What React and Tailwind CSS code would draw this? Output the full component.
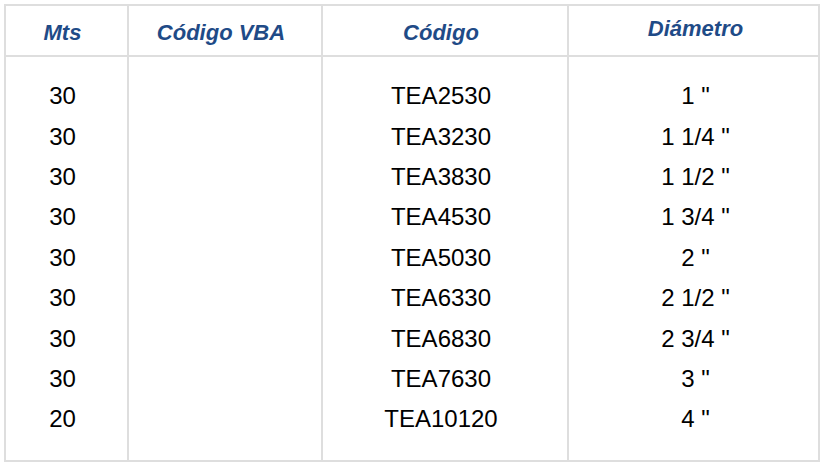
import React from "react";

const rows = [
  ["30", "TEA2530", '1 "'],
  ["30", "TEA3230", '1 1/4 "'],
  ["30", "TEA3830", '1 1/2 "'],
  ["30", "TEA4530", '1 3/4 "'],
  ["30", "TEA5030", '2 "'],
  ["30", "TEA6330", '2 1/2 "'],
  ["30", "TEA6830", '2 3/4 "'],
  ["30", "TEA7630", '3 "'],
  ["20", "TEA10120", '4 "'],
];

const headers = [
  { label: "Mts", cls: "border-r-2 border-[#dedede] pt-1 pr-2" },
  { label: "Código VBA", cls: "border-r-2 border-[#dedede] pt-1 pr-2" },
  { label: "Código", cls: "border-r-2 border-[#dedede] pt-1 pr-2" },
  { label: "Diámetro", cls: "pb-1 pl-1" },
];

const App = () => {
  return (
    <div className="w-[825px] h-[466px] bg-white pl-1 pt-1 font-['Liberation_Sans',Arial,sans-serif]">
      <div className="w-[816px] border-2 border-[#dedede]">
        {/* Header */}
        <div className="grid grid-cols-[123px_194px_246px_1fr] h-[51px] border-b-2 border-[#dedede]">
          {headers.map((h) => (
            <div
              key={h.label}
              className={`flex items-center justify-center text-[22px] font-bold italic text-[#1f4b87] ${h.cls}`}
            >
              {h.label}
            </div>
          ))}
        </div>

        {/* Body */}
        <div className="grid grid-cols-[123px_194px_246px_1fr] h-[403px] text-[24px] text-black">
          <div className="border-r-2 border-[#dedede] pt-[19px]">
            {rows.map((r, i) => (
              <div key={i} className="h-[40.4px] flex items-center justify-center pr-2">
                {r[0]}
              </div>
            ))}
          </div>
          <div className="border-r-2 border-[#dedede]" />
          <div className="border-r-2 border-[#dedede] pt-[19px]">
            {rows.map((r, i) => (
              <div key={i} className="h-[40.4px] flex items-center justify-center pr-2">
                {r[1]}
              </div>
            ))}
          </div>
          <div className="pt-[19px]">
            {rows.map((r, i) => (
              <div key={i} className="h-[40.4px] flex items-center justify-center pl-1">
                {r[2]}
              </div>
            ))}
          </div>
        </div>
      </div>
    </div>
  );
};

export default App;
